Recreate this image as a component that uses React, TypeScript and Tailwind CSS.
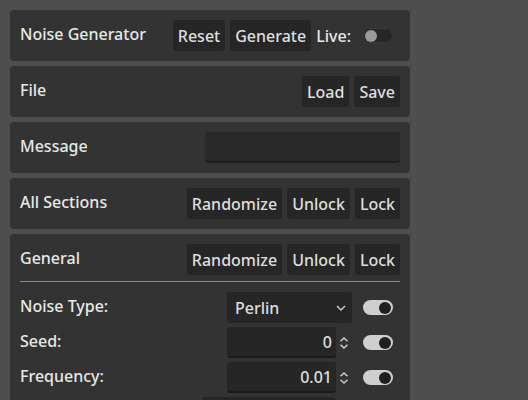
import React from "react";

const font = { fontFamily: '"Noto Sans", "Open Sans", sans-serif' };

function Btn({ children }: { children: React.ReactNode }) {
  return (
    <button className="h-[31px] px-[5px] rounded-[3px] bg-[#262626] text-[16px] font-medium text-[#dedede] leading-none">
      {children}
    </button>
  );
}

function Toggle({ on }: { on?: boolean }) {
  return (
    <div className="w-[44px] flex justify-center">
      {on ? (
        <div className="w-[30px] h-[15px] rounded-full bg-[#cfcfcf] flex items-center justify-end pr-[2px]">
          <div className="w-[12px] h-[12px] rounded-full bg-[#1f1f1f]" />
        </div>
      ) : (
        <div className="w-[30px] h-[15px] rounded-full bg-[#262626] border border-[#3a3a3a] flex items-center pl-[1px]">
          <div className="w-[12px] h-[12px] rounded-full bg-[#9a9a9a]" />
        </div>
      )}
    </div>
  );
}

// labels sit a little above the centre line of their row
function Label({ children }: { children: React.ReactNode }) {
  return <span className="pb-[4px] text-[16px] font-medium text-[#e8e8e8]">{children}</span>;
}

function Panel({ title, children }: { title: string; children?: React.ReactNode }) {
  return (
    <div className="bg-[#333333] rounded-[4px] p-[10px] flex items-center justify-between">
      <Label>{title}</Label>
      <div className="flex items-center gap-[5px]">{children}</div>
    </div>
  );
}

function Spinner() {
  return (
    <svg width="16" height="16" viewBox="0 0 16 16" className="shrink-0">
      <path d="M4.5 6.3 L8 3 L11.5 6.3" fill="none" stroke="#cfcfcf" strokeWidth="1.5" />
      <path d="M4.5 9.7 L8 13 L11.5 9.7" fill="none" stroke="#cfcfcf" strokeWidth="1.5" />
    </svg>
  );
}

function NumberRow({ label, value }: { label: string; value: string }) {
  return (
    <div className="flex items-center justify-between h-[31px]">
      <Label>{label}</Label>
      <div className="flex items-center gap-[4px]">
        <div className="w-[125px] flex items-center">
          <div className="w-[109px] h-[31px] rounded-[3px] bg-[#262626] border-b-2 border-[#1a1a1a] flex items-center justify-end pr-[4px] text-[16px] font-medium text-[#dedede]">
            {value}
          </div>
          <Spinner />
        </div>
        <Toggle on />
      </div>
    </div>
  );
}

export default function App() {
  return (
    <div className="w-[528px] h-[400px] bg-[#4e4e4e] overflow-hidden pt-[10px] pl-[10px]" style={font}>
      <div className="w-[400px] flex flex-col gap-[5px]">
        <Panel title="Noise Generator">
          <Btn>Reset</Btn>
          <Btn>Generate</Btn>
          <span className="text-[16px] font-medium text-[#e8e8e8]">Live:</span>
          <Toggle />
        </Panel>
        <Panel title="File">
          <Btn>Load</Btn>
          <Btn>Save</Btn>
        </Panel>
        <Panel title="Message">
          <div className="w-[195px] h-[31px] rounded-[3px] bg-[#292929] border-b-2 border-[#1e1e1e]" />
        </Panel>
        <Panel title="All Sections">
          <Btn>Randomize</Btn>
          <Btn>Unlock</Btn>
          <Btn>Lock</Btn>
        </Panel>
        <div className="bg-[#333333] rounded-[4px] p-[10px]">
          <div className="flex items-center justify-between pb-[6px] border-b border-[#8a8a8a]">
            <Label>General</Label>
            <div className="flex items-center gap-[5px]">
              <Btn>Randomize</Btn>
              <Btn>Unlock</Btn>
              <Btn>Lock</Btn>
            </div>
          </div>
          <div className="pt-[10px] flex flex-col gap-[4px]">
            <div className="flex items-center justify-between h-[31px]">
              <Label>Noise Type:</Label>
              <div className="flex items-center gap-[4px]">
                <div className="w-[125px] h-[31px] rounded-[3px] bg-[#262626] flex items-center justify-between pl-[8px] pr-[5px] text-[16px] font-medium text-[#dedede]">
                  <span>Perlin</span>
                  <svg width="12" height="12" viewBox="0 0 12 12">
                    <path d="M2 4 L6 8 L10 4" fill="none" stroke="#cfcfcf" strokeWidth="1.4" />
                  </svg>
                </div>
                <Toggle on />
              </div>
            </div>
            <NumberRow label="Seed:" value="0" />
            <NumberRow label="Frequency:" value="0.01" />
            {/* next row, only its input's top edge is in view */}
            <div className="flex items-center justify-end h-[31px]">
              <div className="flex items-center gap-[4px]">
                <div className="w-[150px] flex items-center">
                  <div className="w-[134px] h-[31px] rounded-[3px] bg-[#262626]" />
                </div>
                <Toggle on />
              </div>
            </div>
          </div>
        </div>
      </div>
    </div>
  );
}
